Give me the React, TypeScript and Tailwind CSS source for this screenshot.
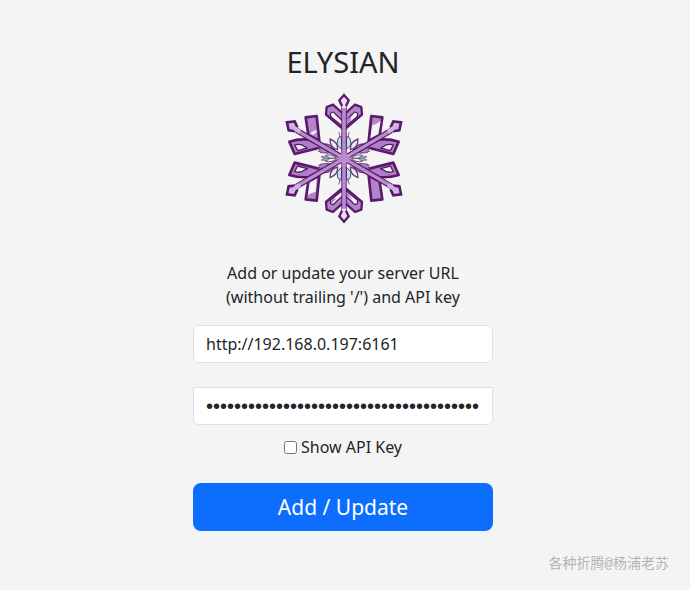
import { useState } from "react";

function Quadrant({ flip }: { flip: string }) {
  return (
    <g transform={flip} strokeLinejoin="round">
      {/* upright block */}
      <path d="M-115 -123 L-82 -127 L-74 -52 L-107 -70Z" fill="#b384cc" stroke="#5a1a6a" strokeWidth="8" />
      {/* low block with its hollow */}
      <path d="M-164 -50 Q-135 -59 -106 -56 L-64 -34 L-148 -13Z" fill="#b07fca" stroke="#5a1a6a" strokeWidth="8" />
      <path d="M-148 -40 Q-130 -45 -119 -36 L-110 -31 L-139 -23Z" fill="#f4f4f4" stroke="#5a1a6a" strokeWidth="4" />
      {/* leaf beside the vertical arm */}
      <path d="M-52 -154 L-33 -161 L-2 -133 L-2 -87 L-54 -131Z" fill="#b384cc" stroke="#5a1a6a" strokeWidth="7" />
      <path d="M-41 -134 Q-34 -144 -25 -132 L-4 -112 L-4 -96 L-40 -125Z" fill="#f4f4f4" stroke="#5a1a6a" strokeWidth="4" />
      {/* small petals of the core */}
      <path d="M-7 -26 L-21 -42 L-18 -60 L-8 -66Z" fill="#b9e6e8" stroke="#5c4670" strokeWidth="3" />
      <path d="M-19 -26 Q-43 -32 -42 -58 Q-17 -49 -19 -26Z" fill="#f0e8f5" stroke="#6b3d80" strokeWidth="4" />
      <path d="M-25 -16 Q-51 -20 -58 -43 Q-36 -43 -25 -16Z" fill="#f0e8f5" stroke="#6b3d80" strokeWidth="4" />
      <path d="M-14 -61 Q-10 -68 -16 -78 M-43 -21 L-74 -30 M-48 -15 L-78 -21" fill="none" stroke="#7b4b91" strokeWidth="3" />
      <path d="M-76 -32 Q-57 -29 -43 -16 L-70 -17Z" fill="#b083c5" stroke="#765083" strokeWidth="3" />
      <path d="M-22 0 Q-35 -14 -55 -9 L-48 0Z" fill="#eee9f2" stroke="#66557b" strokeWidth="3" />
      <path d="M-42 0 L-52 -7 L-69 -5 L-59 0Z" fill="#9eb9c7" stroke="#665077" strokeWidth="2" />
    </g>
  );
}

function DiagonalArm({ flip }: { flip: string }) {
  return (
    <g transform={flip}>
      <path d="M0 0 L-142 -84" stroke="#5a1a6a" strokeWidth="17" />
      <path d="M-171 -108 L-148 -111 L-141 -96 L-149 -82 L-166 -84Z" fill="#dcbde9" stroke="#5a1a6a" strokeWidth="8" />
      <path d="M0 0 L-146 -86" stroke="#b88cd0" strokeWidth="10" />
      <path d="M-159 -98 L-132 -79" stroke="#d3b0e3" strokeWidth="12" />
    </g>
  );
}

function Snowflake() {
  return (
    <svg
      role="img"
      aria-label="Elysian snowflake"
      viewBox="-6 -3 420 435"
      className="h-[145px] w-[140px]"
    >
      <g transform="translate(207 220)">
        <Quadrant flip="scale(1 1)" />
        <Quadrant flip="scale(-1 1)" />
        <Quadrant flip="scale(1 -1)" />
        <Quadrant flip="scale(-1 -1)" />

        {/* gleams and hollows of the blocks */}
        <path d="M-102 -75 Q-94 -82 -83 -85 L-82 -78 L-93 -70Z" fill="#f0e8f5" />
        <path d="M-103 73 L-82 61 L-85 101 Q-97 102 -108 110Z" fill="#f4f4f4" />
        <path d="M85 -100 Q98 -102 110 -112 L103 -73 L79 -60Z" fill="#f4f4f4" />
        <path d="M7 -118 L22 -125 L19 -112 L7 -101Z" fill="#b384cc" />
        <path d="M-39 137 L-24 121 Q-34 116 -39 128Z" fill="#b384cc" />
        <path d="M7 98 L26 124 L18 118 L7 112Z" fill="#b384cc" />

        <DiagonalArm flip="scale(1 1)" />
        <DiagonalArm flip="scale(-1 1)" />
        <DiagonalArm flip="scale(1 -1)" />
        <DiagonalArm flip="scale(-1 -1)" />

        {/* vertical arm */}
        <path d="M0 -158 V158" stroke="#5a1a6a" strokeWidth="16" />
        <path d="M0 -160 V160" stroke="#b88cd0" strokeWidth="11" />
        <path d="M0 -190 L14 -174 L6 -160 V-151 H-6 V-160 L-14 -174Z" fill="#eadcf1" />
        <path d="M-6 -157 L-14 -174 L0 -190 L14 -174 L6 -157" fill="none" stroke="#5a1a6a" strokeWidth="7" />
        <path d="M0 190 L14 174 L6 160 V151 H-6 V160 L-14 174Z" fill="#eadcf1" />
        <path d="M-6 157 L-14 174 L0 190 L14 174 L6 157" fill="none" stroke="#5a1a6a" strokeWidth="7" />
        <path d="M-7 -14 H7 L20 -6 L16 0 L20 6 L7 14 H-7 L-20 6 L-16 0 L-20 -6Z" fill="#b88cd0" />
      </g>
    </svg>
  );
}

const fieldClass =
  "h-[38px] w-full border border-[#dee2e6] bg-white px-3 text-[#212529] outline-none focus:border-[#86b7fe]";

export default function App() {
  const [url, setUrl] = useState("http://192.168.0.197:6161");
  const [apiKey, setApiKey] = useState("k3v9x2m7q4w8z1n6b5t0r3y7u2p9s4d8f1g6h5j");
  const [showKey, setShowKey] = useState(false);

  return (
    <main className="relative min-h-screen bg-[#f4f4f4] pt-11 pr-1 pb-14 font-['Noto_Sans',sans-serif] text-base leading-6 text-[#212529]">
      <form
        className="mx-auto flex w-full max-w-[300px] flex-col items-center"
        onSubmit={(event) => event.preventDefault()}
      >
        <h1 className="text-[29px] leading-9">ELYSIAN</h1>
        <div className="mt-1">
          <Snowflake />
        </div>
        <p className="mt-8 text-center">
          Add or update your server URL
          <br />
          (without trailing '/') and API key
        </p>
        <input
          type="text"
          aria-label="Server URL"
          value={url}
          onChange={(event) => setUrl(event.target.value)}
          className={`${fieldClass} mt-4 rounded-md`}
        />
        <input
          type={showKey ? "text" : "password"}
          aria-label="API key"
          value={apiKey}
          onChange={(event) => setApiKey(event.target.value)}
          className={`${fieldClass} mt-6 rounded-b-md font-['Liberation_Sans',sans-serif] text-xl`}
        />
        <label className="mt-[10px] flex items-center gap-1">
          <input
            type="checkbox"
            checked={showKey}
            onChange={(event) => setShowKey(event.target.checked)}
            className="size-[13px]"
          />
          Show API Key
        </label>
        <button
          type="submit"
          className="mt-6 h-12 w-full rounded-lg bg-[#0d6efd] text-[21px] text-white hover:bg-[#0b5ed7]"
        >
          Add / Update
        </button>
      </form>
      <p className="absolute right-[21px] bottom-[14px] font-['Liberation_Mono','Noto_Sans_CJK_SC',sans-serif] text-[14px] text-[#b4b4b4]">
        各种折腾@杨浦老苏
      </p>
    </main>
  );
}
